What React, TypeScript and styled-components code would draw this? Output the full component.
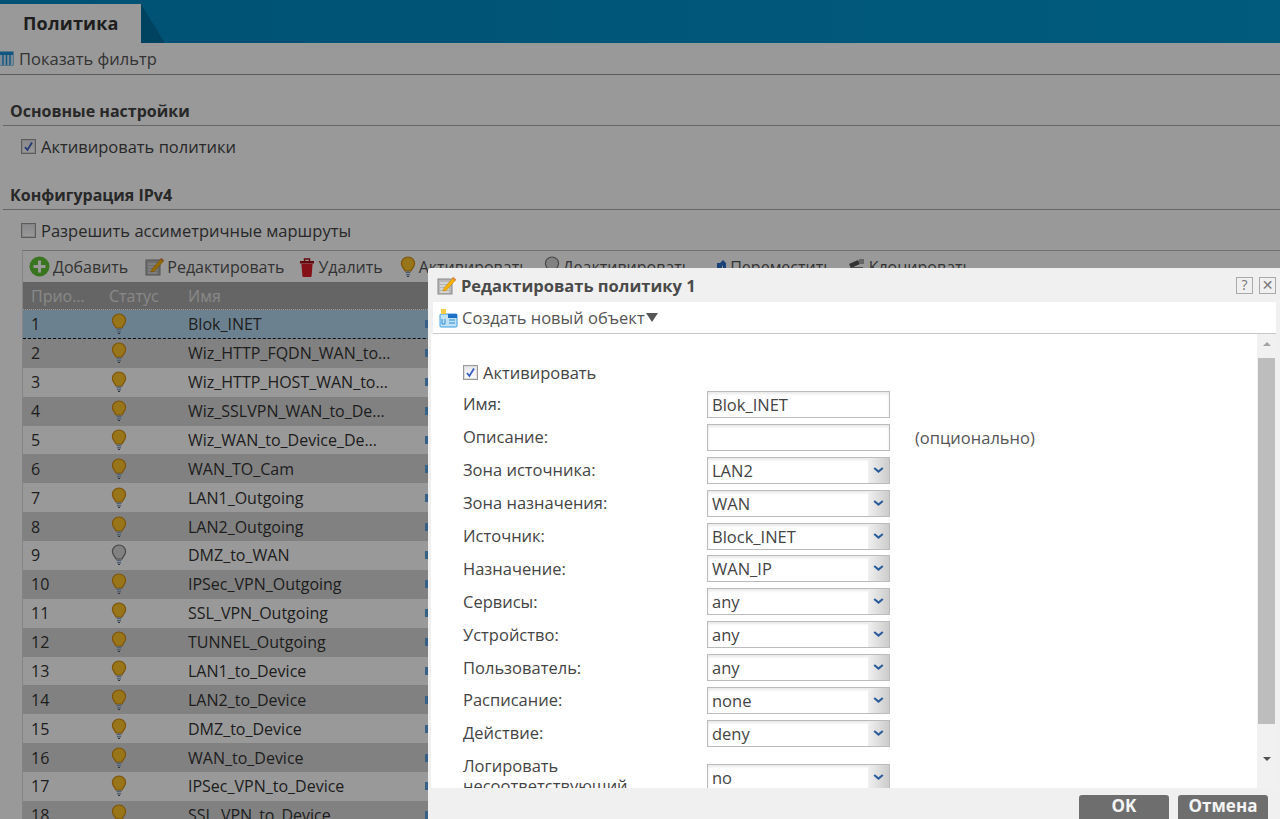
import React from 'react';
import styled, { createGlobalStyle } from 'styled-components';

const Global = createGlobalStyle`
  html, body { margin: 0; padding: 0; height: 100%; overflow: hidden; background: #fff; }
  * { box-sizing: border-box; }
  body { font-family: "Open Sans", "Noto Sans", "DejaVu Sans", sans-serif; color: #333; }
`;

const Page = styled.div`
  position: relative;
  width: 1280px;
  height: 819px;
  overflow: hidden;
  background: #fff;
`;
const Main = styled.div`
  display: flex;
  flex-direction: column;
  height: 819px;
  overflow: hidden;
`;
const TopBar = styled.div`
  height: 43px;
  flex: none;
  padding-top: 4px;
  display: flex;
  background: linear-gradient(90deg, #0088c0, #0098d0);
`;
const Tab = styled.div`
  width: 141px;
  height: 39px;
  background: #fff;
  font-size: 18px;
  font-weight: 700;
  color: #333;
  padding: 0 0 0 23px;
  line-height: 38px;
  letter-spacing: 0.2px;
`;
const TabShade = styled.div`
  width: 24px;
  height: 39px;
  background: #0070a0;
  clip-path: polygon(0 0, 100% 100%, 0 100%);
`;
const FilterBar = styled.div`
  height: 32px;
  flex: none;
  display: flex;
  align-items: center;
  gap: 5px;
  border-bottom: 1px solid #9a9a9a;
  font-size: 16.5px;
  color: #555;
`;
const Section = styled.div`
  flex: none;
  height: ${(p: { $h: number }) => p.$h}px;
  margin: 0 0 0 3px;
  border-bottom: 1px solid #a8a8a8;
  padding: 0 0 0 7px;
  display: flex;
  align-items: flex-end;
  font-size: 16px;
  font-weight: 700;
  color: #444;
  line-height: 28px;
`;
const CheckRow = styled.label`
  flex: none;
  display: flex;
  align-items: center;
  gap: 5px;
  height: ${(p: { $h: number }) => p.$h}px;
  padding-left: ${(p: { $l?: number }) => p.$l ?? 21}px;
  font-size: 16.5px;
  color: #444;
`;
const Box = styled.span`
  width: 15px;
  height: 15px;
  flex: none;
  display: flex;
  align-items: center;
  justify-content: center;
  border: 1px solid #999;
  background: linear-gradient(#e4e4ec, #fff);
  box-shadow: inset 0 0 0 1px #ddd;
`;
const Panel = styled.div`
  margin-left: 22px;
  border-top: 1px solid #bbb;
  border-left: 1px solid #ddd;
  flex: none;
`;
const Toolbar = styled.div`
  height: 31px;
  display: flex;
  align-items: center;
  padding-left: 6px;
  font-size: 16px;
  color: #555;
  white-space: nowrap;
`;
const ToolItem = styled.span`
  display: inline-flex;
  align-items: center;
  gap: 3px;
  margin-right: ${(p: { $m: number }) => p.$m}px;
`;
const HeadRow = styled.div`
  height: 28px;
  display: flex;
  align-items: center;
  background: #a8a8a8;
  border-bottom: 1px dotted #fff;
  font-size: 16px;
  color: #e4e4e4;
`;
const Row = styled.div<{ $even: boolean; $sel: boolean }>`
  height: 28.875px;
  display: flex;
  align-items: center;
  font-size: 16px;
  color: #333;
  background: ${(p) => (p.$sel ? '#b4d8ee' : p.$even ? '#d8d8d8' : '#fff')};
  border-bottom: ${(p) => (p.$sel ? '1px dashed #111' : 'none')};
`;
const ColPrio = styled.div`
  width: 86px;
  padding-left: 8px;
  flex: none;
  overflow: hidden;
  white-space: nowrap;
`;
const ColStatus = styled.div<{ $icon?: boolean }>`
  width: 79px;
  flex: none;
  display: flex;
  padding-left: ${(p) => (p.$icon ? '2px' : '0')};
`;
const ColName = styled.div`
  width: 237px;
  flex: none;
  overflow: hidden;
  white-space: nowrap;
`;
const Dot = styled.span`
  width: 3px;
  height: 8px;
  background: #5aa0e0;
  flex: none;
`;
const Backdrop = styled.div`
  position: absolute;
  inset: 0;
  background: rgba(0, 0, 0, 0.4);
`;
const Dialog = styled.div`
  position: absolute;
  left: 428px;
  top: 268px;
  width: 852px;
  height: 551px;
  background: #f0f0f0;
  border-radius: 3px 0 0 0;
  display: flex;
  flex-direction: column;
`;
const TitleBar = styled.div`
  height: 34px;
  flex: none;
  display: flex;
  align-items: center;
  gap: 5px;
  padding: 0 4px 0 9px;
  font-size: 16.5px;
  font-weight: 700;
  color: #4a4a4a;
`;
const TitleText = styled.span`
  flex: 1;
`;
const WinBtn = styled.span`
  width: 17px;
  height: 17px;
  border: 1px solid #aaa;
  margin-left: 1px;
  display: flex;
  align-items: center;
  justify-content: center;
  font-size: 14px;
  font-weight: 400;
  color: #777;
  line-height: 1;
`;
const ObjBar = styled.div`
  height: 32px;
  flex: none;
  margin: 0 4px 0 5px;
  background: #fff;
  border-bottom: 1px solid #c8c8c8;
  display: flex;
  align-items: center;
  gap: 4px;
  padding-left: 6px;
  font-size: 16.5px;
  color: #555;
`;
const Arrow = styled.span`
  width: 0;
  height: 0;
  border-left: 6px solid transparent;
  border-right: 6px solid transparent;
  border-top: 9px solid #555;
  margin-left: -3px;
`;
const Body = styled.div`
  height: 454px;
  flex: none;
  margin: 0 4px 0 3px;
  background: #fff;
  display: flex;
  overflow: hidden;
`;
const Form = styled.div`
  flex: 1;
  padding: 22px 0 0 32px;
  overflow: hidden;
`;
const FormRow = styled.div`
  display: flex;
  align-items: center;
  height: 32.9px;
`;
const Label = styled.div`
  width: 244px;
  flex: none;
  font-size: 16.5px;
  color: #444;
  line-height: 20px;
`;
const Field = styled.div`
  width: 183px;
  height: 27px;
  flex: none;
  border: 1px solid #bbb;
  box-shadow: inset 0 2px 3px #e8e8e8;
  display: flex;
  align-items: center;
  padding-left: 4px;
  font-size: 16.5px;
  color: #444;
  background: #fff;
`;
const FieldValue = styled.span`
  flex: 1;
`;
const Chevron = styled.span`
  width: 21px;
  height: 100%;
  flex: none;
  display: flex;
  align-items: center;
  justify-content: center;
  background: linear-gradient(90deg, #f0f0f0, #ccc);
`;
const Hint = styled.div`
  margin-left: 25px;
  font-size: 16.5px;
  color: #555;
`;
const LogRow = styled.div`
  display: flex;
  align-items: flex-start;
  padding-top: 6px;
`;
const LogField = styled(Field)`
  margin-top: 8px;
`;
const Scrollbar = styled.div`
  width: 19px;
  flex: none;
  background: #f1f1f1;
  display: flex;
  flex-direction: column;
  align-items: center;
`;
const ScrollArrow = styled.span<{ $down?: boolean }>`
  width: 0;
  height: 0;
  flex: none;
  margin: ${(p) => (p.$down ? '5px 0 0' : '8px 0 12px')};
  border-left: 4px solid transparent;
  border-right: 4px solid transparent;
  ${(p) => (p.$down ? 'border-top: 4px solid #505050;' : 'border-bottom: 4px solid #a3a3a3;')}
`;
const Thumb = styled.div`
  width: 17px;
  height: 366px;
  flex: none;
  background: #bdbdbd;
`;
const ScrollGap = styled.div`
  flex: 1;
`;
const Footer = styled.div`
  flex: 1;
  display: flex;
  justify-content: flex-end;
  gap: 9px;
  padding: 7px 12px 0 0;
`;
const Btn = styled.div`
  width: 90px;
  height: 24px;
  border-radius: 3px 3px 0 0;
  background: #6e6e6e;
  color: #f4f4f4;
  font-size: 17px;
  font-weight: 700;
  text-align: center;
  line-height: 21px;
`;

const Bulb = ({ off }: { off?: boolean }) => (
  <svg width="16" height="22" viewBox="0 0 16 22">
    <path d="M8 1a6.6 6.6 0 0 0-6.6 6.6c0 3 2.2 4.4 3.6 7.4h6c1.4-3 3.6-4.4 3.6-7.4A6.6 6.6 0 0 0 8 1z" fill={off ? '#d8d8d8' : '#fdc32a'} stroke={off ? '#777' : '#d28c10'} strokeWidth="1.2" />
    <path d="M5.6 15.6h4.8v1.6H5.6zM6 18h4v1.5H6z" fill="#8aa4c0" />
    <path d="M7 20h2v1H7z" fill="#556" />
  </svg>
);
const Add = () => (
  <svg width="21" height="21" viewBox="0 0 21 21">
    <circle cx="10.5" cy="10.5" r="10" fill="#5fc232" />
    <path d="M9 4.5h3V9h4.5v3H12v4.5H9V12H4.5V9H9z" fill="#fff" />
  </svg>
);
const Edit = ({ size = 19 }: { size?: number }) => (
  <svg width={size} height={size} viewBox="0 0 19 19">
    <rect x="1" y="3" width="14" height="15" fill="#b8b8b8" stroke="#888" />
    <path d="M3 7h9M3 10h7M3 13h9M3 16h9" stroke="#eee" />
    <path d="M7 12l9-10 2.4 2.2-9 10L6 15z" fill="#f5b400" stroke="#c98600" strokeWidth=".6" />
    <path d="M15.5 1.5l3 2.7" stroke="#d84" strokeWidth="2" />
  </svg>
);
const Trash = () => (
  <svg width="16" height="20" viewBox="0 0 16 20">
    <path d="M1 4h14v2.5H1z" fill="#a80e18" />
    <path d="M5.5 4V2h5v2" fill="none" stroke="#a80e18" strokeWidth="1.4" />
    <path d="M2.4 6.8h11.2L12.6 19a1 1 0 0 1-1 1H4.4a1 1 0 0 1-1-1z" fill="#df1c28" />
  </svg>
);
const Move = () => (
  <svg width="21" height="20" viewBox="0 0 21 20">
    <path d="M1 14l5-3v2h3v3H6v2z" fill="#3da43a" />
    <path d="M11 6h3l3-3 3 3v11h-3V9l-1-.5V17h-5z" fill="#2d6fc8" />
  </svg>
);
const Clone = () => (
  <svg width="19" height="19" viewBox="0 0 19 19">
    <path d="M2 7l9-4 2 4-9 4z" fill="#555" />
    <path d="M3 10h13v7H3z" fill="#888" />
    <path d="M12 2h5v5h-5z" fill="#aaa" />
  </svg>
);
const TableIcon = () => (
  <svg width="15" height="15" viewBox="0 0 15 15" style={{ marginLeft: -1 }}>
    <rect x=".5" y=".5" width="14" height="14" fill="#1b8fd8" />
    <path d="M1 4h13v10H1z" fill="#cfe8f8" />
    <path d="M4 4v10M7.5 4v10M11 4v10" stroke="#1b8fd8" strokeWidth="1.4" />
  </svg>
);
const ObjIcon = () => (
  <svg width="19" height="20" viewBox="0 0 19 20">
    <rect x="1" y="6" width="17" height="13" rx="1" fill="#bfe0f6" stroke="#3aa0e0" />
    <path d="M9 6h9v4H9z" fill="#1e6fc4" />
    <path d="M2 1h5v5H2z" fill="#f7cc4a" />
    <path d="M3 11v5h3v-5M10 12h6M10 15h6" stroke="#2f8fd0" fill="none" />
  </svg>
);
const Tick = () => (
  <svg width="11" height="11" viewBox="0 0 11 11">
    <path d="M2 6l2.4 3L9 1.5" fill="none" stroke="#3a5ec0" strokeWidth="1.8" />
  </svg>
);
const Chev = () => (
  <svg width="11" height="7" viewBox="0 0 11 7">
    <path d="M1.2 1l4.3 3.6L9.8 1" fill="none" stroke="#2a5c9c" strokeWidth="2" />
  </svg>
);

const names = ['Blok_INET','Wiz_HTTP_FQDN_WAN_to…','Wiz_HTTP_HOST_WAN_to…','Wiz_SSLVPN_WAN_to_De…','Wiz_WAN_to_Device_De…','WAN_TO_Cam','LAN1_Outgoing','LAN2_Outgoing','DMZ_to_WAN','IPSec_VPN_Outgoing','SSL_VPN_Outgoing','TUNNEL_Outgoing','LAN1_to_Device','LAN2_to_Device','DMZ_to_Device','WAN_to_Device','IPSec_VPN_to_Device','SSL_VPN_to_Device'];
const selects: [string, string][] = [['Зона источника:','LAN2'],['Зона назначения:','WAN'],['Источник:','Block_INET'],['Назначение:','WAN_IP'],['Сервисы:','any'],['Устройство:','any'],['Пользователь:','any'],['Расписание:','none'],['Действие:','deny']];

export default function App() {
  return (
    <Page>
      <Global />
      <Main>
        <TopBar><Tab>Политика</Tab><TabShade /></TopBar>
        <FilterBar><TableIcon />Показать фильтр</FilterBar>
        <Section $h={51}>Основные настройки</Section>
        <CheckRow $h={40}><Box><Tick /></Box>Активировать политики</CheckRow>
        <Section $h={44}>Конфигурация IPv4</Section>
        <CheckRow $h={40}><Box />Разрешить ассиметричные маршруты</CheckRow>
        <Panel>
          <Toolbar>
            <ToolItem $m={17}><Add />Добавить</ToolItem>
            <ToolItem $m={15}><Edit />Редактировать</ToolItem>
            <ToolItem $m={17}><Trash />Удалить</ToolItem>
            <ToolItem $m={15}><Bulb />Активировать</ToolItem>
            <ToolItem $m={15}><Bulb off />Деактивировать</ToolItem>
            <ToolItem $m={14}><Move />Переместить</ToolItem>
            <ToolItem $m={0}><Clone />Клонировать</ToolItem>
          </Toolbar>
          <HeadRow><ColPrio>Прио…</ColPrio><ColStatus>Статус</ColStatus><ColName>Имя</ColName></HeadRow>
          {names.map((n, i) => (
            <Row key={n} $even={i % 2 === 1} $sel={i === 0}>
              <ColPrio>{i + 1}</ColPrio>
              <ColStatus $icon><Bulb off={i === 8} /></ColStatus>
              <ColName>{n}</ColName>
              <Dot />
            </Row>
          ))}
        </Panel>
      </Main>
      <Backdrop />
      <Dialog>
        <TitleBar>
          <Edit />
          <TitleText>Редактировать политику 1</TitleText>
          <WinBtn>?</WinBtn>
          <WinBtn>✕</WinBtn>
        </TitleBar>
        <ObjBar><ObjIcon />Создать новый объект<Arrow /></ObjBar>
        <Body>
          <Form>
            <CheckRow $h={32} $l={0}><Box><Tick /></Box>Активировать</CheckRow>
            <FormRow><Label>Имя:</Label><Field>Blok_INET</Field></FormRow>
            <FormRow><Label>Описание:</Label><Field /><Hint>(опционально)</Hint></FormRow>
            {selects.map(([l, v]) => (
              <FormRow key={l}><Label>{l}</Label><Field><FieldValue>{v}</FieldValue><Chevron><Chev /></Chevron></Field></FormRow>
            ))}
            <LogRow>
              <Label>Логировать несоответствующий</Label>
              <LogField><FieldValue>no</FieldValue><Chevron><Chev /></Chevron></LogField>
            </LogRow>
          </Form>
          <Scrollbar>
            <ScrollArrow />
            <Thumb />
            <ScrollGap />
            <ScrollArrow $down />
            <ScrollGap />
          </Scrollbar>
        </Body>
        <Footer><Btn>OK</Btn><Btn>Отмена</Btn></Footer>
      </Dialog>
    </Page>
  );
}
